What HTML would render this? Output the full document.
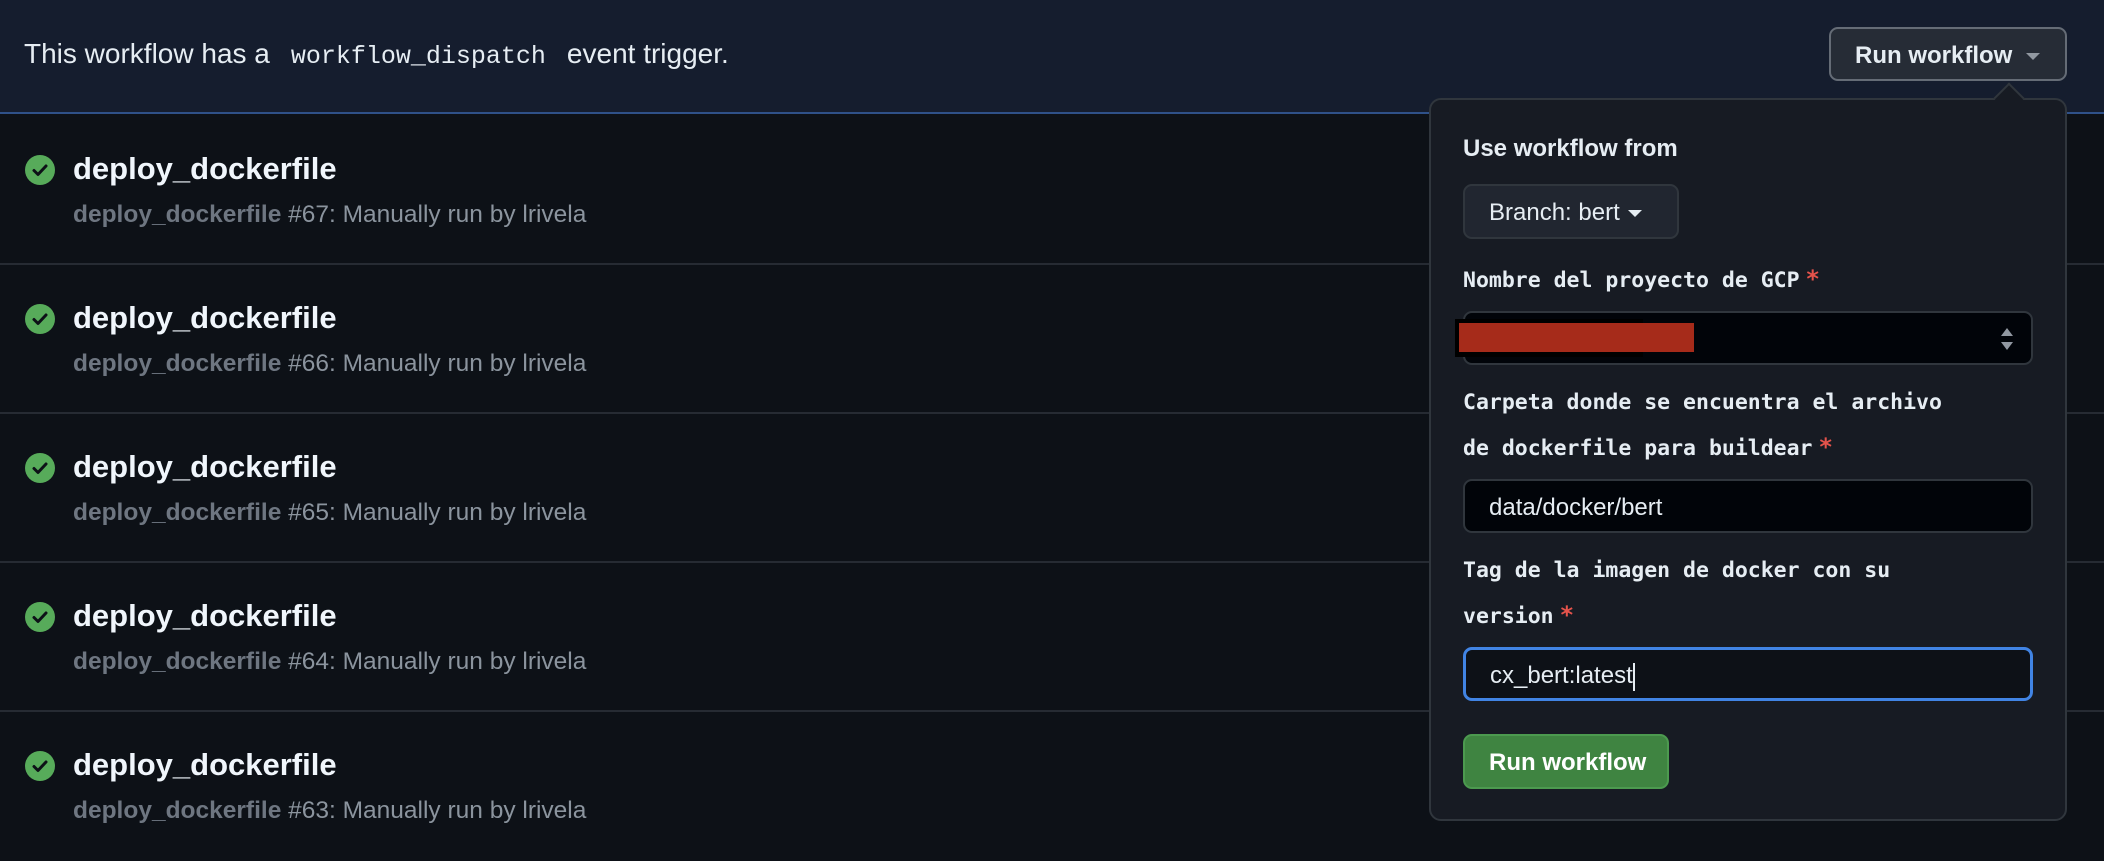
<!DOCTYPE html>
<html><head><meta charset="utf-8"><style>
*{box-sizing:border-box;margin:0;padding:0}
body{width:2104px;height:850px;background:#0d1117;font-family:"Liberation Sans",sans-serif;color:#e6edf3;position:relative;overflow:hidden}
.hdr{position:absolute;left:0;top:0;width:2104px;height:114px;background:#151d2e;border-bottom:2px solid #2f5189}
.hdr .t{position:absolute;left:24px;top:38px;font-size:28px;color:#e6edf3}
.mono{font-family:"Liberation Mono",monospace}
.hdr .t .mono{font-size:25px;padding:0 6px}
.btn{position:absolute;left:1829px;top:27px;width:238px;height:54px;border:2px solid #656c76;border-radius:9px;background:#262c36;font-size:24px;font-weight:bold;color:#e6edf3;padding:13px 0 0 24px}
.caret{display:inline-block;width:0;height:0;border-left:7px solid transparent;border-right:7px solid transparent;border-top:7px solid #9198a1;vertical-align:middle;margin-left:14px}
.row{position:absolute;left:0;width:2104px;height:149px;border-bottom:2px solid #262b33}
.row .ic{position:absolute;left:25px;top:39px;width:30px;height:30px;border-radius:50%;background:#57ab5a}
.row .ti{position:absolute;left:73px;top:35px;font-size:31px;font-weight:bold;color:#f0f6fc}
.row .su{position:absolute;left:73px;top:85px;font-size:24.5px;color:#8b949e}
.row .su b{color:#6e7681}
.pop{position:absolute;left:1429px;top:98px;width:638px;height:723px;background:#171b23;border:2px solid #30363d;border-radius:12px}
.arrow{position:absolute;left:1998px;top:87px;width:22px;height:22px;background:#171b23;border-left:2px solid #30363d;border-top:2px solid #30363d;transform:rotate(45deg)}
.lb{position:absolute;left:1463px;font-family:"DejaVu Sans Mono","Liberation Mono",monospace;font-weight:bold;font-size:21.5px;color:#e6edf3}
.st{color:#e5534b;margin-left:6px;font-size:24px}
.inp{position:absolute;left:1463px;width:570px;height:54px;background:#010409;border:2px solid #30363d;border-radius:9px;font-size:24px;color:#e6edf3;padding:13px 0 0 24px}
</style></head><body>
<div class="hdr"><div class="t">This workflow has a<span class="mono"> workflow_dispatch </span>event trigger.</div></div>
<div class="btn">Run workflow<span class="caret"></span></div>

<div class="row" style="top:116px"><div class="ic"><svg width="30" height="30" viewBox="0 0 30 30"><path d="M9 15.5l4 4 8-8.5" stroke="#0d1117" stroke-width="3" fill="none" stroke-linecap="round" stroke-linejoin="round"/></svg></div><div class="ti">deploy_dockerfile</div><div class="su"><b>deploy_dockerfile</b> #67: Manually run by lrivela</div></div>
<div class="row" style="top:265px"><div class="ic"><svg width="30" height="30" viewBox="0 0 30 30"><path d="M9 15.5l4 4 8-8.5" stroke="#0d1117" stroke-width="3" fill="none" stroke-linecap="round" stroke-linejoin="round"/></svg></div><div class="ti">deploy_dockerfile</div><div class="su"><b>deploy_dockerfile</b> #66: Manually run by lrivela</div></div>
<div class="row" style="top:414px"><div class="ic"><svg width="30" height="30" viewBox="0 0 30 30"><path d="M9 15.5l4 4 8-8.5" stroke="#0d1117" stroke-width="3" fill="none" stroke-linecap="round" stroke-linejoin="round"/></svg></div><div class="ti">deploy_dockerfile</div><div class="su"><b>deploy_dockerfile</b> #65: Manually run by lrivela</div></div>
<div class="row" style="top:563px"><div class="ic"><svg width="30" height="30" viewBox="0 0 30 30"><path d="M9 15.5l4 4 8-8.5" stroke="#0d1117" stroke-width="3" fill="none" stroke-linecap="round" stroke-linejoin="round"/></svg></div><div class="ti">deploy_dockerfile</div><div class="su"><b>deploy_dockerfile</b> #64: Manually run by lrivela</div></div>
<div class="row" style="top:712px;border:none"><div class="ic"><svg width="30" height="30" viewBox="0 0 30 30"><path d="M9 15.5l4 4 8-8.5" stroke="#0d1117" stroke-width="3" fill="none" stroke-linecap="round" stroke-linejoin="round"/></svg></div><div class="ti">deploy_dockerfile</div><div class="su"><b>deploy_dockerfile</b> #63: Manually run by lrivela</div></div>

<div class="pop"></div>
<div class="arrow"></div>
<div style="position:absolute;left:1463px;top:135px;font-size:24px;font-weight:bold">Use workflow from</div>
<div style="position:absolute;left:1463px;top:184px;width:216px;height:55px;background:#212630;border:2px solid #30363d;border-radius:9px;font-size:24px;padding:13px 0 0 24px;color:#e6edf3">Branch: bert<span class="caret" style="margin-left:8px;border-top-color:#e6edf3"></span></div>
<div class="lb" style="top:265px">Nombre del proyecto de GCP<span class="st">*</span></div>
<div class="inp" style="top:311px"></div>
<div style="position:absolute;left:1455px;top:319px;width:188px;height:38px;background:#000"></div>
<div style="position:absolute;left:1459px;top:323px;width:235px;height:29px;background:#a62b1a"></div>
<svg style="position:absolute;left:1999px;top:327px" width="16" height="24" viewBox="0 0 16 24"><path d="M8 1l6 8H2z M8 23l6-8H2z" fill="#9198a1"/></svg>
<div class="lb" style="top:390px">Carpeta donde se encuentra el archivo</div>
<div class="lb" style="top:433px">de dockerfile para buildear<span class="st">*</span></div>
<div class="inp" style="top:479px">data/docker/bert</div>
<div class="lb" style="top:558px">Tag de la imagen de docker con su</div>
<div class="lb" style="top:601px">version<span class="st">*</span></div>
<div class="inp" style="top:647px;border:3px solid #4184e4;background:#0d1117;padding-top:12px">cx_bert:latest<span style="display:inline-block;width:2px;height:28px;background:#e6edf3;vertical-align:middle"></span></div>
<div style="position:absolute;left:1463px;top:734px;width:206px;height:55px;background:#3f8441;border:2px solid #4c9a4f;border-radius:9px;font-size:24px;font-weight:bold;color:#fff;padding:13px 0 0 24px">Run workflow</div>
</body></html>
